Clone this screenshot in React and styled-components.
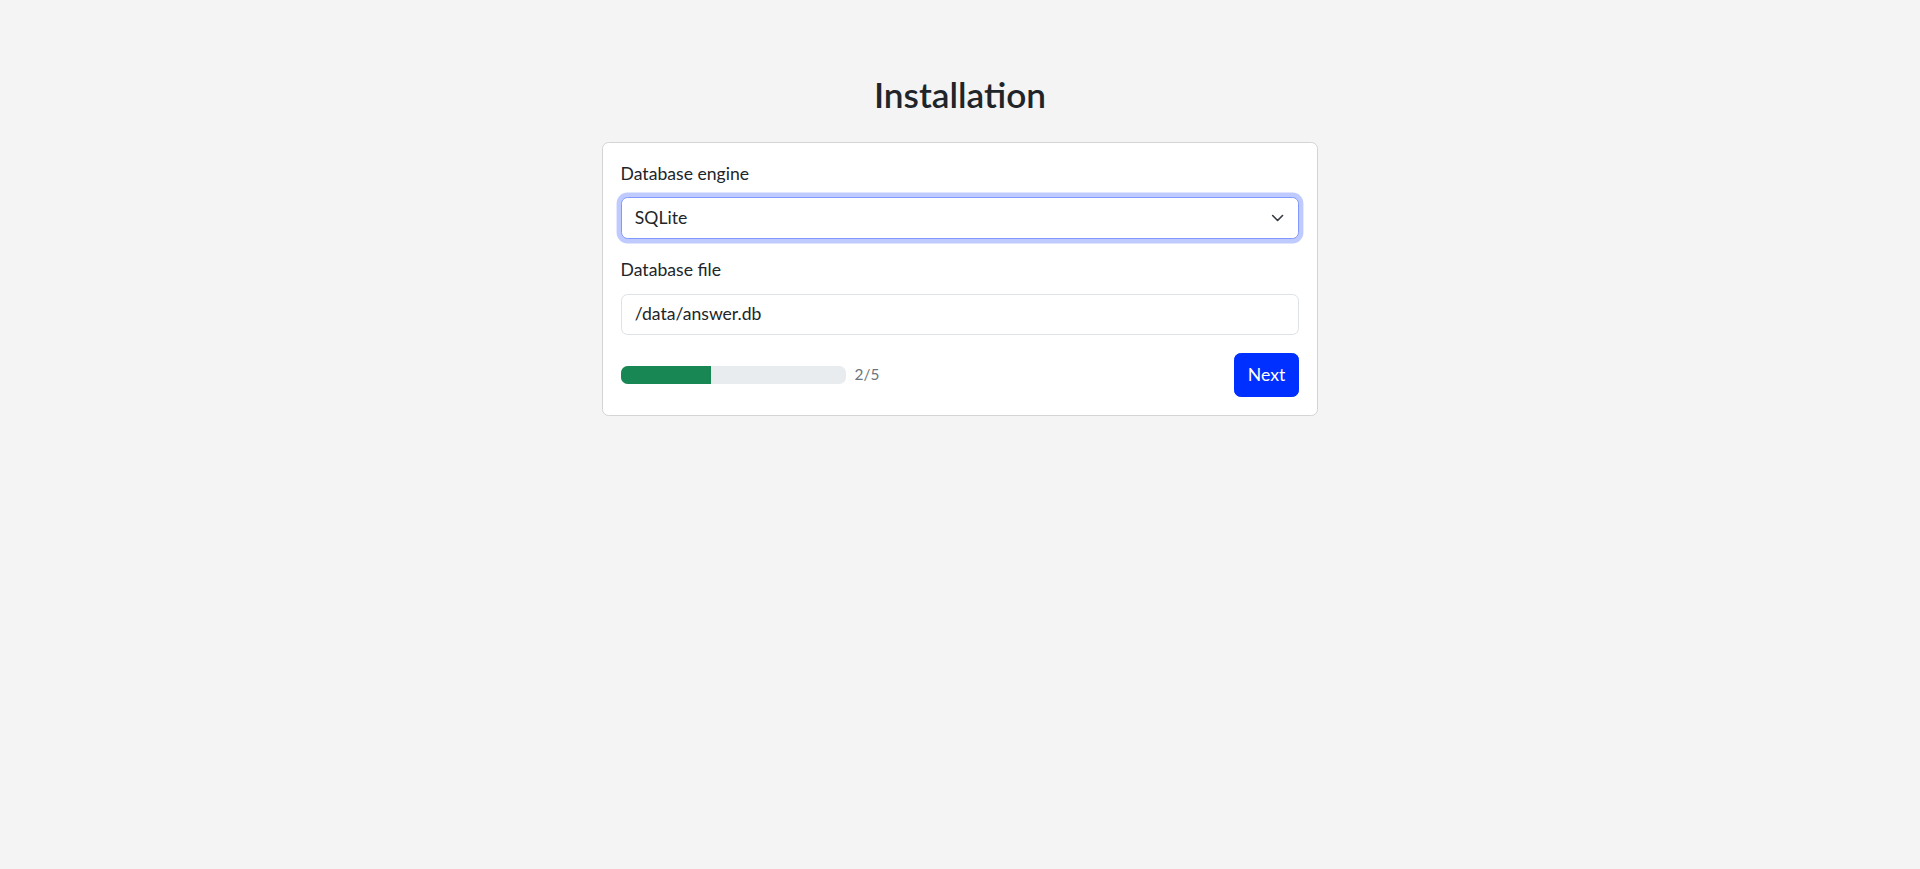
import React, { useState } from 'react';
import styled, { createGlobalStyle } from 'styled-components';

const GlobalStyle = createGlobalStyle`
  html, body {
    margin: 0;
    padding: 0;
    background-color: #f4f4f4;
  }
  body {
    font-family: 'Segoe UI', Lato, 'Noto Sans', sans-serif;
    font-size: 17.6px;
    line-height: 1.5;
    color: #212529;
  }
  *, *::before, *::after {
    box-sizing: border-box;
  }
`;

const Page = styled.div`
  display: flex;
  flex-direction: column;
  align-items: center;
  padding-top: 73px;
`;

const Title = styled.h2`
  margin: 0 0 27px;
  font-size: 35.2px;
  font-weight: 600;
  line-height: 1.2;
  color: #212529;
`;

const Card = styled.div`
  width: 716px;
  background-color: #fff;
  border: 1px solid #d4d4d4;
  border-radius: 6.6px;
  padding: 17.6px 17.6px 18.6px;
`;

const Field = styled.div`
  margin-bottom: 18px;
`;

const Label = styled.label`
  display: block;
  margin-bottom: 10px;
`;

const SelectWrap = styled.div`
  position: relative;
`;

const Select = styled.select`
  display: block;
  width: 100%;
  appearance: none;
  font: inherit;
  color: #212529;
  background-color: #fff;
  padding: 6.8px 49px 6.8px 13.2px;
  border: 1px solid ${(p) => (p.$focused ? '#8098ff' : '#dee2e6')};
  border-radius: 6.6px;
  box-shadow: ${(p) => (p.$focused ? '0 0 0 4.4px rgba(0, 48, 255, 0.25)' : 'none')};
  outline: none;
`;

const Chevron = styled.svg`
  position: absolute;
  right: 15px;
  top: 50%;
  transform: translateY(-50%);
  width: 13.2px;
  height: 13.2px;
  pointer-events: none;
`;

const Input = styled.input`
  display: block;
  width: 100%;
  font: inherit;
  color: #212529;
  background-color: #fff;
  padding: 6.6px 13.2px;
  border: 1px solid #dee2e6;
  border-radius: 6.6px;
  outline: none;
`;

const Footer = styled.div`
  display: flex;
  align-items: center;
  justify-content: space-between;
`;

const ProgressGroup = styled.div`
  display: flex;
  align-items: center;
  gap: 9px;
`;

const Progress = styled.div`
  width: 225px;
  height: 17.6px;
  background-color: #e9ecef;
  border-radius: 6.6px;
  overflow: hidden;
`;

const ProgressFill = styled.div`
  height: 100%;
  background-color: #198754;
`;

const StepText = styled.small`
  font-size: 15.4px;
  color: #6c757d;
`;

const Button = styled.button`
  font: inherit;
  color: #fff;
  background-color: #0030ff;
  border: 1px solid #0030ff;
  border-radius: 6.6px;
  padding: 7.6px 13.2px;
  cursor: pointer;
`;

const App = () => {
  const [engine, setEngine] = useState('sqlite');
  const [file, setFile] = useState('/data/answer.db');
  const step = 2;
  const total = 5;

  return (
    <Page>
      <GlobalStyle />
      <Title>Installation</Title>
      <Card>
        <Field>
          <Label htmlFor="engine">Database engine</Label>
          <SelectWrap>
            <Select
              id="engine"
              $focused
              value={engine}
              onChange={(e) => setEngine(e.target.value)}
            >
              <option value="sqlite">SQLite</option>
              <option value="mysql">MySQL</option>
              <option value="postgres">PostgreSQL</option>
            </Select>
            <Chevron viewBox="0 0 16 16">
              <path
                d="m2 5 6 6 6-6"
                fill="none"
                stroke="#343a40"
                strokeWidth="2"
                strokeLinecap="round"
                strokeLinejoin="round"
              />
            </Chevron>
          </SelectWrap>
        </Field>
        <Field>
          <Label htmlFor="file">Database file</Label>
          <Input id="file" value={file} onChange={(e) => setFile(e.target.value)} />
        </Field>
        <Footer>
          <ProgressGroup>
            <Progress>
              <ProgressFill style={{ width: `${(step / total) * 100}%` }} />
            </Progress>
            <StepText>
              {step}/{total}
            </StepText>
          </ProgressGroup>
          <Button>Next</Button>
        </Footer>
      </Card>
    </Page>
  );
};

export default App;
